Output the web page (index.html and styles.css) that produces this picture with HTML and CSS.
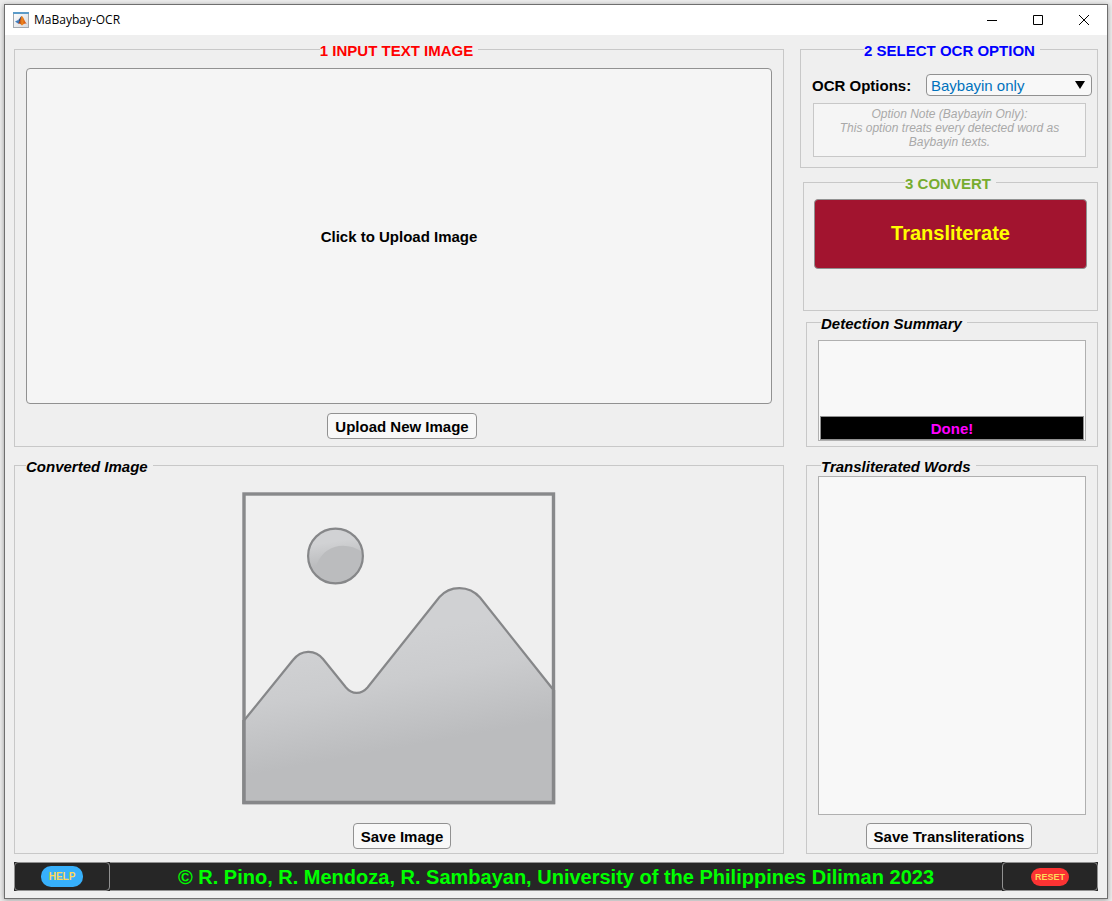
FILE: index.html
```html
<!DOCTYPE html>
<html lang="en">
<head>
<meta charset="utf-8">
<title>MaBaybay-OCR</title>
<link rel="stylesheet" href="styles.css">
</head>
<body>
<div class="window">
  <header class="titlebar">
    <svg class="app-icon" viewBox="0 0 16 16" aria-hidden="true">
      <defs>
        <linearGradient id="page" x1="0" y1="0" x2="1" y2="1"><stop offset="0" stop-color="#ffffff"/><stop offset="1" stop-color="#d5d9de"/></linearGradient>
        <linearGradient id="peak" x1="0" y1="0" x2="1" y2="0"><stop offset="0" stop-color="#8c1c10"/><stop offset=".45" stop-color="#f08a1d"/><stop offset="1" stop-color="#c5380f"/></linearGradient>
      </defs>
      <rect x=".5" y=".5" width="15" height="15" fill="url(#page)" stroke="#a3a8ae"/>
      <rect x="0" y="0" width="16" height="2" fill="#5b9bc8"/>
      <path d="M2 9.5 5.2 8 7 10 5 11.5Z" fill="#3f7fc0"/>
      <path d="M5.2 8C6.6 7.4 7.2 4.6 8.8 4L7.4 10.4 5 11.5 6.6 9.6Z" fill="#274b86"/>
      <path d="M8.8 4C10.6 4.6 11.6 10 14 12 12.2 11 11 11.6 9 13.6 8.2 12.4 7 11 5 11.5 7.2 10 7.6 5 8.8 4Z" fill="url(#peak)"/>
    </svg>
    <span class="app-name">MaBaybay-OCR</span>
    <div class="window-controls">
      <button type="button" aria-label="Minimize"><svg viewBox="0 0 12 12"><path d="M1 6.5H11"/></svg></button>
      <button type="button" aria-label="Maximize"><svg viewBox="0 0 12 12"><path d="M1.500 1.500H10.500V10.500H1.500Z"/></svg></button>
      <button type="button" aria-label="Close"><svg viewBox="0 0 12 12"><path d="M1 1 11 11M11 1 1 11"/></svg></button>
    </div>
  </header>

  <main class="workspace">
    <fieldset class="panel panel-input">
      <legend class="title-center title-red">1 INPUT TEXT IMAGE</legend>
      <button type="button" class="drop-area">Click to Upload Image</button>
      <button type="button" class="button">Upload New Image</button>
    </fieldset>

    <div class="side">
      <fieldset class="panel panel-options">
        <legend class="title-center title-blue">2 SELECT OCR OPTION</legend>
        <div class="option-row">
          <label for="ocr-option">OCR Options:</label>
          <div class="select-box">
            <select id="ocr-option"><option>Baybayin only</option></select>
            <svg class="arrow" viewBox="0 0 10 8" aria-hidden="true"><path d="M0 0H10L5 8Z"/></svg>
          </div>
        </div>
        <p class="option-note">Option Note (Baybayin Only):<br>This option treats every detected word as Baybayin texts.</p>
      </fieldset>

      <fieldset class="panel panel-convert">
        <legend class="title-center title-green">3 CONVERT</legend>
        <button type="button" class="convert-button">Transliterate</button>
      </fieldset>

      <fieldset class="panel panel-summary">
        <legend class="title-italic">Detection Summary</legend>
        <div class="summary-box">
          <textarea class="summary-text" rows="2" aria-label="Detection Summary" readonly></textarea>
          <output class="status">Done!</output>
        </div>
      </fieldset>
    </div>

    <fieldset class="panel panel-result">
      <legend class="title-italic">Converted Image</legend>
      <svg class="placeholder" viewBox="0 0 314 313" role="img" aria-label="No image">
        <defs>
          <linearGradient id="hill" gradientUnits="userSpaceOnUse" x1="136" y1="146" x2="156" y2="256"><stop offset="0" stop-color="#d0d1d3"/><stop offset=".4" stop-color="#cbccce"/><stop offset="1" stop-color="#bbbcbe"/></linearGradient>
          <linearGradient id="sun" x1="0" y1="0" x2=".15" y2="1"><stop offset=".3" stop-color="#d1d2d4"/><stop offset=".7" stop-color="#bbbcbe"/></linearGradient>
          <clipPath id="disc"><circle cx="93.500" cy="64" r="27"/></clipPath>
        </defs>
        <rect x="2" y="2" width="309.500" height="308.500" fill="none" stroke="#88898b" stroke-width="3.400"/>
        <path d="M2 228.500 51 168C59 157.500 73 157 81 167L104 195.500C110 202.500 119 203 125.500 195.500L197.500 105C208 93 227 93 238 105.500L311.500 198V310H2Z" fill="url(#hill)" stroke="#868789" stroke-width="2.200"/>
        <path d="M2 228V310.500H311.500V198" fill="none" stroke="#868789" stroke-width="3.400"/>
        <circle cx="93.500" cy="64" r="27.400" fill="url(#sun)"/>
        <path d="M75 72C82 53 104 48 122 61V96H66Z" fill="#bbbcbe" clip-path="url(#disc)"/>
        <circle cx="93.500" cy="64" r="27.400" fill="none" stroke="#868789" stroke-width="2.200"/>
      </svg>
      <button type="button" class="button">Save Image</button>
    </fieldset>

    <fieldset class="panel panel-words">
      <legend class="title-italic">Transliterated Words</legend>
      <textarea class="words-text" aria-label="Transliterated Words" readonly></textarea>
      <button type="button" class="button">Save Transliterations</button>
    </fieldset>
  </main>

  <footer class="footer">
    <button type="button" class="footer-button"><span class="pill pill-help">HELP</span></button>
    <p class="credits">© R. Pino, R. Mendoza, R. Sambayan, University of the Philippines Diliman 2023</p>
    <button type="button" class="footer-button"><span class="pill pill-reset">RESET</span></button>
  </footer>
</div>
</body>
</html>
```

FILE: styles.css
```css
* { box-sizing: border-box; }

body {
  margin: 0;
  min-height: 100vh;
  padding: 4px 4px 2px;
  display: flex;
  background: #ececec;
  font: bold 15px/17px "Liberation Sans", Arial, sans-serif;
  color: #000;
}

button, select, textarea { font: inherit; color: inherit; margin: 0; }
p { margin: 0; }

.window {
  flex: 1;
  min-width: 0;
  display: flex;
  flex-direction: column;
  border: 1px solid #6f6f6f;
  background: #efefef;
  box-shadow: 0 1px 5px rgba(0, 0, 0, 0.35);
}

.titlebar {
  display: flex;
  align-items: center;
  height: 30px;
  padding-left: 8px;
  background: #fff;
}
.app-icon { width: 16px; height: 16px; }
.app-name {
  margin-left: 5px;
  font: 12px/16px "Open Sans", "Noto Sans", sans-serif;
}
.window-controls { display: flex; margin-left: auto; }
.window-controls button {
  width: 46px;
  height: 30px;
  padding: 0;
  border: 0;
  background: none;
  display: grid;
  place-items: center;
}
.window-controls svg {
  width: 12px;
  height: 12px;
  fill: none;
  stroke: #000;
}

.workspace {
  flex: 1;
  display: grid;
  grid-template-columns: minmax(0, 1fr) 298px;
  grid-template-rows: 407fr 398fr;
  gap: 9px 16px;
  padding: 5px 9px 8px;
}

.panel {
  margin: 0;
  min-width: 0;
  border: 1px solid #c8c8c8;
  display: flex;
  flex-direction: column;
  align-items: center;
}
.panel legend { padding: 2px 5px 0 0; }
.title-center { margin: 0 auto; }
.title-red { color: #f00; }
.title-blue { color: #00f; }
.title-green { color: #77ac30; }
.title-italic { font-style: italic; }

.button {
  height: 26px;
  padding: 0 7px;
  border: 1px solid #919191;
  border-radius: 4px;
  background: #f8f8f8;
}

.panel-input { padding: 9px 11px 7px; gap: 9px; }
.panel-input .button, .panel-result .button { margin-left: 6px; }
.drop-area {
  flex: 1;
  align-self: stretch;
  border: 1px solid #919191;
  border-radius: 4px;
  background: #f5f5f5;
}

.side { display: flex; flex-direction: column; }

.panel-options { padding: 15px 5px 10px 11px; align-items: stretch; }
.option-row { display: flex; justify-content: space-between; align-items: center; }
.select-box { position: relative; width: 166px; }
.select-box select {
  appearance: none;
  display: block;
  width: 100%;
  height: 22px;
  padding: 0 20px 0 4px;
  border: 1px solid #919191;
  border-radius: 4px;
  background: #f8f8f8;
  color: #0072bd;
  font-weight: normal;
}
.arrow {
  position: absolute;
  top: 7px;
  right: 7px;
  width: 10px;
  height: 8px;
  pointer-events: none;
}
.option-note {
  margin: 7px 6px 0 1px;
  height: 54px;
  padding: 3px 20px;
  border: 1px solid #c8c8c8;
  background: #f5f5f5;
  color: #a9a9a9;
  font: italic 12px/14px "Liberation Sans", Arial, sans-serif;
  text-align: center;
}

.panel-convert { margin: 5px 0 0 3px; padding: 7px 10px 41px; }
.convert-button {
  align-self: stretch;
  height: 70px;
  padding: 0 0 2px;
  border: 1px solid #919191;
  border-radius: 4px;
  background: #a2142f;
  color: #ff0;
  font-size: 20px;
}

.panel-summary { flex: 1; margin: 2px 0 0 6px; padding: 8px 11px 5px; }
.panel-summary legend, .panel-words legend { margin-left: 3px; }
.summary-box {
  flex: 1;
  align-self: stretch;
  display: flex;
  flex-direction: column;
  border: 1px solid #b0b0b0;
  background: #f8f8f8;
}
.summary-text {
  flex: 1;
  min-height: 0;
  border: 0;
  background: none;
  resize: none;
}
.status {
  margin: 0 1px;
  height: 24px;
  border: 1px solid #919191;
  background: #000;
  color: #f0f;
  line-height: 24px;
  text-align: center;
}

.panel-result { padding: 17px 11px 4px; gap: 18px; }
.placeholder { flex: 1 1 0; height: 0; min-height: 312px; width: 100%; }

.panel-words { margin-left: 6px; padding: 1px 11px 4px; gap: 8px; }
.panel-words .button { margin-right: 6px; }
.words-text {
  flex: 1;
  align-self: stretch;
  border: 1px solid #b0b0b0;
  background: #f8f8f8;
  resize: none;
}

.footer {
  display: flex;
  height: 29px;
  margin: 0 9px 7px;
  background: #262626;
}
.footer-button {
  width: 96px;
  padding: 0;
  border: 1px solid #919191;
  border-radius: 4px;
  background: #262626;
  display: grid;
  place-items: center;
}
.credits {
  flex: 1;
  border: solid #919191;
  border-width: 1px 0;
  color: #0f0;
  font-size: 20px;
  line-height: 28px;
  text-align: center;
}
.pill {
  border-radius: 10px;
  padding: 0 8px;
  font-size: 10px;
  color: #ffd95a;
}
.pill-help { background: #37b0fb; line-height: 21px; }
.pill-reset { background: #fb3333; padding: 0 4px; font-size: 9px; line-height: 18px; }
```
